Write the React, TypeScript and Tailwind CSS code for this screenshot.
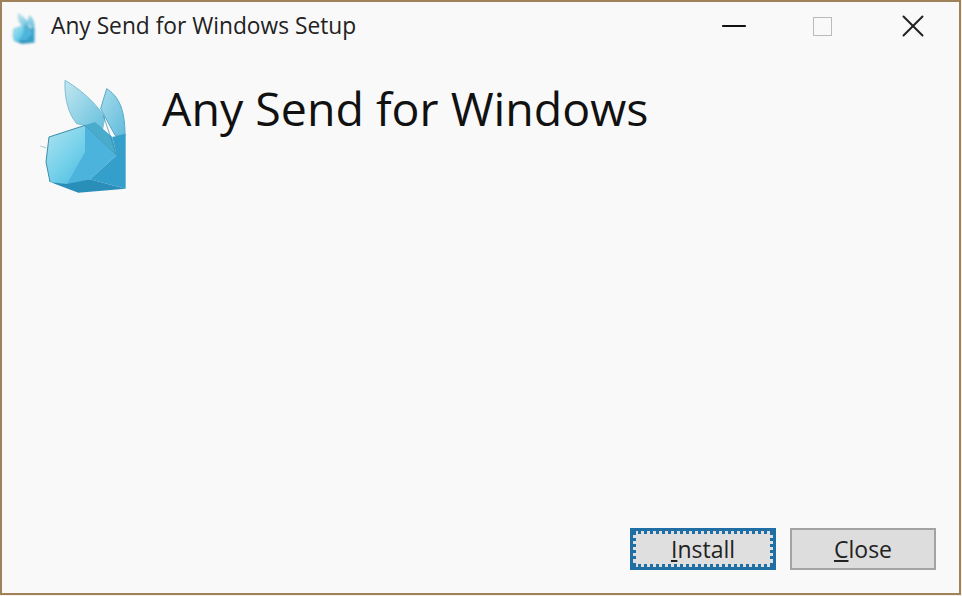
import { Minus, X } from "lucide-react";

function BunnyBox({ className }: { className: string }) {
  return (
    <svg viewBox="0 0 300 375" className={className}>
      <defs>
        <linearGradient id="face" x1="0" y1="0" x2="0.8" y2="1">
          <stop offset="0" stopColor="#b0e4ef" />
          <stop offset="0.6" stopColor="#74d0ea" />
          <stop offset="1" stopColor="#4fbce0" />
        </linearGradient>
        <linearGradient id="earLeft" x1="0" y1="0" x2="1" y2="1">
          <stop offset="0" stopColor="#c2e7ef" />
          <stop offset="1" stopColor="#62bedd" />
        </linearGradient>
        <linearGradient id="earRight" x1="0" y1="0" x2="1" y2="1">
          <stop offset="0" stopColor="#a6dcec" />
          <stop offset="1" stopColor="#62bcdc" />
        </linearGradient>
      </defs>
      <path d="M215 50 C248 72 270 105 270 190 L240 190 L197 110 Z" fill="url(#earRight)" stroke="#58a8c6" strokeWidth="3" />
      <path d="M90 25 C135 52 175 85 210 135 L200 185 L150 160 L125 155 C100 125 88 80 90 25 Z" fill="url(#earLeft)" stroke="#7fbdd2" strokeWidth="3" />
      <path d="M42 195 L150 160 L165 322 L95 338 L45 330 L33 270 Z" fill="url(#face)" />
      <path d="M42 195 L150 160 M42 195 L33 270 L45 330" fill="none" stroke="#3d8ca8" strokeWidth="3" />
      <path d="M150 160 L245 250 L165 322 L95 338 L150 240 Z" fill="#4cb4dc" />
      <path d="M150 160 L180 150 L232 195 L245 250 Z" fill="#4aaccd" />
      <path d="M232 195 L272 185 L272 350 L165 322 L245 250 Z" fill="#349fca" />
      <path d="M205 130 L245 250 M150 160 L245 250" fill="none" stroke="#2f88a8" strokeWidth="2" />
      <path d="M45 330 L95 336 L165 322 L272 350 L130 362 Z" fill="#2a8fb8" />
      <path d="M16 222 L34 228" stroke="#a5c9d4" strokeWidth="3" />
    </svg>
  );
}

export default function App() {
  return (
    <div className="w-[962px] h-[596px] bg-[#f6f1e8]">
      <div className="w-[961px] h-[595px] flex flex-col bg-[#f9f9f9] border-2 border-[#a0825a] font-['Open_Sans','Noto_Sans',sans-serif] text-[#111]">
        <div className="h-[48px] shrink-0 flex items-center pl-[8px]">
          <BunnyBox className="w-[27px] h-[34px] mt-[4px] blur-[1px]" />
          <span className="ml-[14px] text-[22.75px] text-[#222]">Any Send for Windows Setup</span>
          <div className="ml-auto flex items-center">
            <Minus className="w-[38px] h-[38px] text-[#111]" strokeWidth={1.26} />
            <div className="ml-[60px] w-[19px] h-[19px] border border-[#bbb]" />
            <X className="ml-[62px] mr-[27px] w-[38px] h-[38px] text-[#222]" strokeWidth={1.26} />
          </div>
        </div>

        <div className="flex items-start pl-[33px] pt-[22px]">
          <BunnyBox className="w-[100px] h-[125px] blur-[0.6px]" />
          <h1 className="ml-[27px] mt-[6px] text-[46.5px] leading-[60px] font-normal">Any Send for Windows</h1>
        </div>

        <div className="mt-auto flex justify-end gap-[14px] pr-[23px] pb-[23px]">
          <button className="w-[146px] h-[42px] bg-[#dfdfdf] border-[3px] border-[#1f6fa5] outline-[3px] outline-dotted outline-[#1f6fa5] outline-offset-[-6px] text-[23px] text-[#222]">
            <span className="underline underline-offset-2">I</span>nstall
          </button>
          <button className="w-[146px] h-[42px] bg-[#dddddd] border-2 border-[#a3a3a3] text-[23px] text-[#222]">
            <span className="underline underline-offset-2">C</span>lose
          </button>
        </div>
      </div>
    </div>
  );
}
